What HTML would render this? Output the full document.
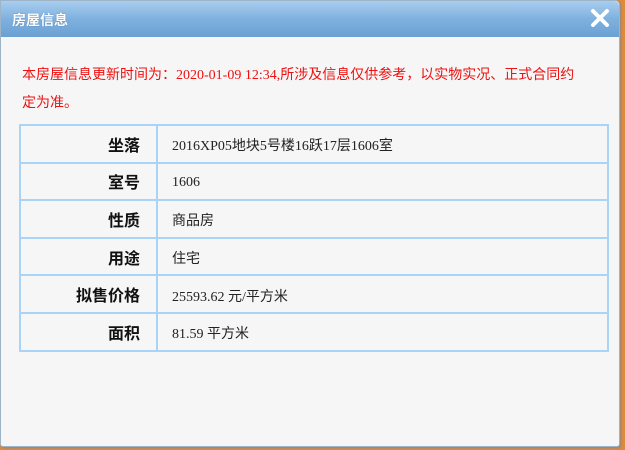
<!DOCTYPE html>
<html><head><meta charset="utf-8"><style>
html,body{margin:0;padding:0;width:625px;height:450px;overflow:hidden;background:#e0883c;}
.dlg{position:absolute;left:0;top:0;width:620px;height:447px;background:#f6f6f6;border:1px solid #9db4c8;border-radius:0 5px 3px 3px;box-sizing:border-box;box-shadow:1px 1px 2px #888;}
.title{position:absolute;left:0;top:0;width:100%;height:36px;background:linear-gradient(#a8cdee,#7fb1df 50%,#6aa0d2);border-radius:0 5px 0 0;}
.title span{position:absolute;left:11px;top:9px;color:#fff;font:bold 14px "Liberation Sans","Noto Sans CJK SC",sans-serif;text-shadow:0 0 1px #3a6a9a;}
.close{position:absolute;right:8px;top:6px;width:22px;height:22px;}
.note{position:absolute;left:21px;top:61px;width:565px;color:#ee1111;font:14px/28px "Liberation Serif","Noto Sans CJK SC",sans-serif;}
table{position:absolute;left:18px;top:123px;width:590px;border-collapse:collapse;table-layout:fixed;}
tr{height:37.6px;}
td{border:2px solid #a9d4f7;height:37.6px;font:14px "Liberation Serif","Noto Sans CJK SC",serif;color:#222;padding:0;box-sizing:border-box;}
td.l{width:137px;text-align:right;padding-right:16px;font:bold 16px "Liberation Sans","Noto Sans CJK SC",sans-serif;color:#111;}
td.v{padding-left:14px;padding-top:3px;}
</style></head><body>
<div class="dlg">
<div class="title"><span>房屋信息</span>
<svg class="close" viewBox="0 0 22 22"><path d="M4 4L18 18M18 4L4 18" stroke="#fff" stroke-width="4" stroke-linecap="round"/></svg></div>
<div class="note">本房屋信息更新时间为：2020-01-09 12:34,所涉及信息仅供参考，以实物实况、正式合同约定为准。</div>
<table>
<tr><td class="l">坐落</td><td class="v">2016XP05地块5号楼16跃17层1606室</td></tr>
<tr><td class="l">室号</td><td class="v">1606</td></tr>
<tr><td class="l">性质</td><td class="v">商品房</td></tr>
<tr><td class="l">用途</td><td class="v">住宅</td></tr>
<tr><td class="l">拟售价格</td><td class="v">25593.62 元/平方米</td></tr>
<tr><td class="l">面积</td><td class="v">81.59 平方米</td></tr>
</table>
</div>
</body></html>
